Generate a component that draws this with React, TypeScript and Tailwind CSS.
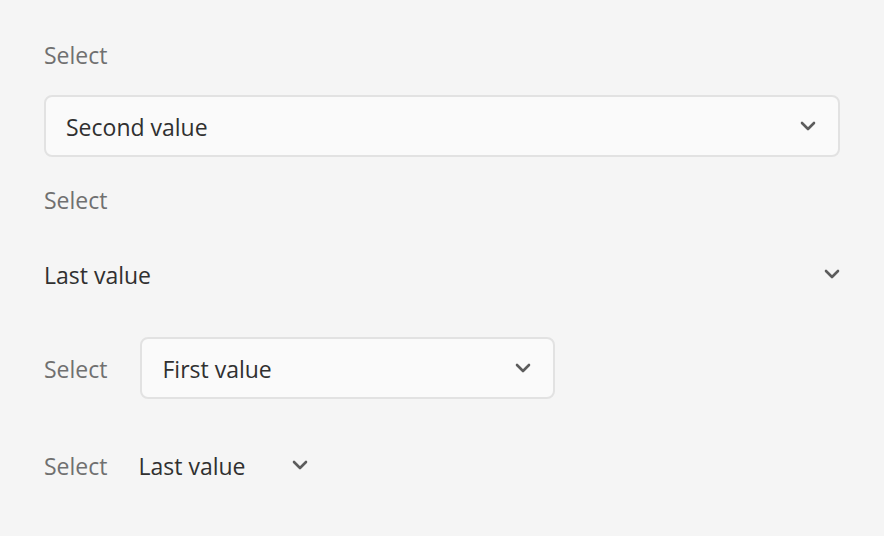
function Chevron({ className = "" }: { className?: string }) {
  return (
    <svg viewBox="0 0 16 10" className={`w-[16px] h-[10px] text-[#5c5c5c] ${className}`} fill="none">
      <path d="M2 2l6 6 6-6" stroke="currentColor" strokeWidth="2.6" strokeLinecap="round" strokeLinejoin="round" />
    </svg>
  );
}

function Label({ children }: { children: React.ReactNode }) {
  return <div className="text-[23px] leading-[32px] pt-[1px] text-[#707070]">{children}</div>;
}

function OutlineSelect({ value, className = "" }: { value: string; className?: string }) {
  return (
    <div
      className={`flex items-center justify-between h-[62px] rounded-[8px] border-2 border-[#e2e2e2] bg-[#fafafa] pl-[20px] pr-[22px] ${className}`}
    >
      <span className="text-[23px] pt-[3px] text-[#303030]">{value}</span>
      <Chevron />
    </div>
  );
}

function PlainSelect({ value, className = "" }: { value: string; className?: string }) {
  return (
    <div className={`flex items-center justify-between h-[62px] ${className}`}>
      <span className="text-[23px] pt-[3px] text-[#303030]">{value}</span>
      <Chevron />
    </div>
  );
}

export default function App() {
  return (
    <div
      className="w-[884px] h-[536px] bg-[#f5f5f5] px-[44px] pt-[38px]"
      style={{ fontFamily: '"Open Sans", "Noto Sans", sans-serif' }}
    >
      <div className="flex flex-col w-[796px]">
        <Label>Select</Label>
        <OutlineSelect value="Second value" className="mt-[24px]" />

        <div className="mt-[26px]">
          <Label>Select</Label>
        </div>
        <PlainSelect value="Last value" className="mt-[27px]" />

        <div className="flex items-center gap-[33px] mt-[32px]">
          <Label>Select</Label>
          <OutlineSelect value="First value" className="w-[415px]" />
        </div>

        <div className="flex items-center gap-[31px] mt-[35px]">
          <Label>Select</Label>
          <PlainSelect value="Last value" className="w-[170px]" />
        </div>
      </div>
    </div>
  );
}
